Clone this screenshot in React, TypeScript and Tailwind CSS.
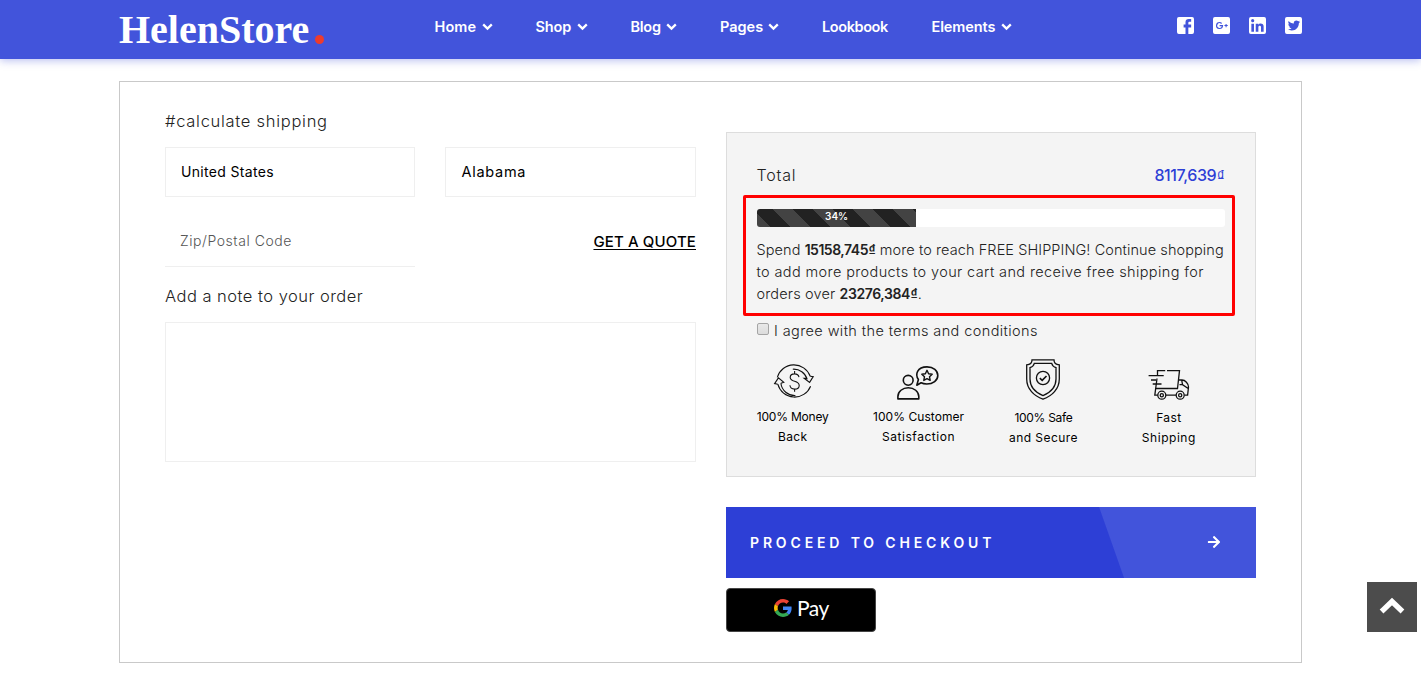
import type { ReactNode } from "react";
import { FaArrowRight } from "react-icons/fa";

function Dong({ className = "" }: { className?: string }) {
  return <span className={"font-['Liberation_Sans'] leading-none tracking-normal " + className}>₫</span>;
}

function Chevron() {
  return (
    <svg width="11" height="8" viewBox="0 0 11 8" fill="none" stroke="#fff" strokeWidth="2.3">
      <path d="M1.2 1.4 5.5 5.6 9.8 1.4" />
    </svg>
  );
}

const nav = [
  { label: "Home", menu: true, cls: "w-[42px] tracking-[0.1px]" },
  { label: "Shop", menu: true, cls: "w-[36px] tracking-[-0.15px]" },
  { label: "Blog", menu: true, cls: "w-[30.5px] tracking-[-0.25px]" },
  { label: "Pages", menu: true, cls: "w-[43px] tracking-[0px]" },
  { label: "Lookbook", menu: false, cls: "w-[66.5px] tracking-[-0.4px]" },
  { label: "Elements", menu: true, cls: "w-[64px] tracking-[-0.1px]" },
];

const social = [
  "M5,3H19A2,2 0 0,1 21,5V19A2,2 0 0,1 19,21H5A2,2 0 0,1 3,19V5A2,2 0 0,1 5,3M18,5H15.5A3.5,3.5 0 0,0 12,8.5V11H10V14H12V21H15V14H18V11H15V9A1,1 0 0,1 16,8H18V5Z",
  "M19,3A2,2 0 0,1 21,5V19A2,2 0 0,1 19,21H5A2,2 0 0,1 3,19V5A2,2 0 0,1 5,3H19Z M10 8.2A3.8 3.8 0 1 0 13.7 12.6V11.4H10V12.7H12.3A2.4 2.4 0 1 1 11.6 10.3L12.6 9.3A3.8 3.8 0 0 0 10 8.2Z M16.3 10.3V11.5H15.1V12.6H16.3V13.8H17.4V12.6H18.6V11.5H17.4V10.3Z",
  "M19,3A2,2 0 0,1 21,5V19A2,2 0 0,1 19,21H5A2,2 0 0,1 3,19V5A2,2 0 0,1 5,3H19M18.5,18.5V13.2A3.26,3.26 0 0,0 15.24,9.94C14.39,9.94 13.4,10.46 12.92,11.24V10.13H10.13V18.5H12.92V13.57C12.92,12.8 13.54,12.17 14.31,12.17A1.4,1.4 0 0,1 15.71,13.57V18.5H18.5M6.88,8.56A1.68,1.68 0 0,0 8.56,6.88C8.56,5.95 7.81,5.19 6.88,5.19A1.69,1.69 0 0,0 5.19,6.88C5.19,7.81 5.95,8.56 6.88,8.56M8.27,18.5V10.13H5.5V18.5H8.27Z",
  "M5,3H19A2,2 0 0,1 21,5V19A2,2 0 0,1 19,21H5A2,2 0 0,1 3,19V5A2,2 0 0,1 5,3M17.71,9.33C18.19,8.93 18.75,8.45 19,7.92C18.59,8.13 18.1,8.26 17.56,8.33C18.06,7.97 18.47,7.5 18.68,6.86C18.16,7.14 17.63,7.38 16.97,7.5C15.42,5.63 11.71,7.15 12.37,9.95C9.76,9.79 8.17,8.61 6.85,7.16C6.1,8.38 6.75,10.23 7.64,10.74C7.18,10.71 6.83,10.57 6.5,10.41C6.54,11.95 7.39,12.69 8.58,13.09C8.22,13.16 7.82,13.18 7.44,13.12C7.77,14.19 8.58,14.86 9.9,15C9,15.76 7.34,16.29 6,16.08C7.15,16.81 8.46,17.39 10.28,17.31C14.69,17.11 17.64,13.95 17.71,9.33Z",
];

function Header() {
  return (
    <header className="h-[59px] bg-[#4254db] shadow-[0_2px_8px_rgba(66,84,219,0.35)]">
      <div className="flex h-full pl-[119px]">
        <div className="flex w-[315.5px] pt-[3px]">
          <span className="w-[191px] whitespace-nowrap font-['Liberation_Serif',serif] text-[40px] leading-[54px] font-bold text-white">
            HelenStore
          </span>
          <span className="mt-[32px] ml-[5px] h-[9px] w-[9px] rounded-full bg-[#ee3b2c]" />
        </div>
        <nav className="flex h-[54px] w-[742.5px] items-center gap-[43px] text-[14.5px] font-semibold text-white">
          {nav.map((n) => (
            <a key={n.label} className="flex items-center gap-[5px] whitespace-nowrap">
              <span className={n.cls}>{n.label}</span>
              {n.menu && <Chevron />}
            </a>
          ))}
        </nav>
        <div className="flex gap-[19px] pt-[17px]">
          {social.map((d, i) => (
            <svg key={i} width="17" height="17" viewBox="3 3 18 18" fill="#fff" fillRule="evenodd">
              <path d={d} />
            </svg>
          ))}
        </div>
      </div>
    </header>
  );
}

function ShippingForm() {
  return (
    <section className="w-[531px] pt-[27px]">
      <h3 className="text-[16.5px] leading-6 font-light tracking-[0.72px] text-[#222]">#calculate shipping</h3>
      <div className="mt-[14px] flex gap-[30px] text-[14px]">
        <div className="flex h-[50px] w-[250px] items-center border border-[#efefef] pb-[2px] pl-[15px] tracking-[0.33px]">
          United States
        </div>
        <div className="flex h-[50px] w-[251px] items-center border border-[#efefef] pl-[15.5px] text-[14.5px] tracking-[0.72px]">
          Alabama
        </div>
      </div>
      <div className="mt-[19px] flex justify-between">
        <div className="flex h-[51px] w-[250px] items-center border-b border-[#efefef] pb-[2px] pl-[15px] text-[14px] font-light tracking-[0.55px] text-[#555]">
          Zip/Postal Code
        </div>
        <button className="flex h-[53px] items-center text-[15px] font-medium tracking-[0.12px] whitespace-nowrap underline underline-offset-2">
          GET A QUOTE
        </button>
      </div>
      <h3 className="mt-[15px] text-[16.5px] leading-6 font-light tracking-[0.48px] text-[#222]">
        Add a note to your order
      </h3>
      <div className="mt-[14px] h-[140px] border border-[#efefef]" />
    </section>
  );
}

function Feature({ icon, lines, cls }: { icon: ReactNode; lines: [string, string]; cls: [string, string] }) {
  return (
    <div className="flex w-[125.4px] flex-col items-center text-[12px] leading-5 whitespace-nowrap text-black">
      <div className="flex h-[48px] items-start">{icon}</div>
      <span className={cls[0]}>{lines[0]}</span>
      <span className={cls[1]}>{lines[1]}</span>
    </div>
  );
}

const money = (
  <svg width="42" height="44" viewBox="0 0 42 44" fill="none" stroke="#111" strokeWidth="1.1">
    <path d="M4.3 18.4A17.3 17.3 0 0 1 37.2 17.3" />
    <path d="M19.8 10.2A14 14 0 0 1 34.2 20.4" />
    <path d="M37.2 17.3 40.2 17.6 36.6 23.4 31.2 19.3 34 19.4" />
    <path d="M37.6 27.2A17.3 17.3 0 0 1 4.8 25.2" />
    <path d="M22.4 36.6A14 14 0 0 1 7.9 24.3" />
    <path d="M4.8 25.2 1.6 24.6 5.4 18.9 10.8 23.3 7.9 24.3" />
    <path d="M26 18.2C25.5 15.9 23.8 14.9 21.6 14.9 19 14.9 17.2 16.2 17.2 18.4 17.2 20.8 19.2 21.5 21.6 22.2 24.2 23 26.2 23.8 26.2 26.4 26.2 28.8 24.2 30.1 21.6 30.1 18.9 30.1 17.2 28.8 16.9 26.3M21.6 12.1V14.9M21.6 30.1V32.8" />
  </svg>
);
const customer = (
  <svg width="42" height="44" viewBox="0 0 42 44" fill="none" stroke="#111" strokeWidth="1.6" strokeLinejoin="round">
    <circle cx="11.2" cy="21.3" r="4.9" />
    <path d="M.9 39.9V37.6C.9 32.4 5.6 28.8 11.3 28.8S21.8 32.4 21.8 37.6V39.9Z" />
    <path d="M19.8 26.2 21.4 20.5C17.9 15.5 20 7.9 30 7.9 36.5 7.9 40.8 11.7 40.8 16.5S36 25 29.8 25C27.3 25 25.4 24.5 24.1 23.8Z" />
    <path d="M30 11.3 31.6 14.7 35.2 15.2 32.5 17.7 33.2 21.4 30 19.6 26.8 21.4 27.5 17.7 24.8 15.2 28.4 14.7Z" strokeWidth="1.4" />
  </svg>
);
const shield = (
  <svg width="36" height="44" viewBox="0 0 36 44" fill="none" stroke="#111" strokeWidth="1.3">
    <path d="M7 .9H29C29 3.8 31 5.5 34.3 5.8V20C34.3 30 27 37 18 40.2 9 37 1.7 30 1.7 20V5.8C5 5.5 7 3.8 7 .9Z" />
    <path d="M9.3 4.3H26.7C27.3 6.6 28.8 8 31 8.6V20C31 28 25.5 33.5 18 36.6 10.5 33.5 5 28 5 20V8.6C7.2 8 8.7 6.6 9.3 4.3Z" />
    <circle cx="18" cy="19" r="6.6" />
    <path d="M14.8 19.1 17.2 21.3 21.5 17" strokeWidth="1.6" />
  </svg>
);
const truck = (
  <svg width="42" height="44" viewBox="0 0 42 44" fill="none" stroke="#111" strokeWidth="1.3">
    <path d="M9.5 16V11.6H17.2M19 11.6H31.5L29.5 29.5H8M9 19.5 6.8 36.2H9.8M17.8 36.2H28M36.5 36.2H39.6L40.5 28C40.5 24.5 37.2 21 34 21H30.5M31.5 25.7H34.5L40.2 29.5M34.5 25.7 33.7 21M.6 16.7H15.7M3 21H8M4.7 25H13.5" />
    <circle cx="13.8" cy="36.2" r="4" />
    <circle cx="13.8" cy="36.2" r="1.6" />
    <circle cx="32.2" cy="36.2" r="4" />
    <circle cx="32.2" cy="36.2" r="1.6" />
  </svg>
);

function Summary() {
  return (
    <section className="w-[530px] pt-[50px]">
      <div className="h-[345px] border border-[#ddd] bg-[#f4f4f4] px-[30px] pt-[30px] text-[#222]">
        <div className="flex h-6 items-center justify-between text-[16px]">
          <span className="-ml-[0.5px] font-light tracking-[0.8px]">Total</span>
          <span className="font-medium tracking-[-0.4px] whitespace-nowrap text-[#2d3fd6]">
            8117,639
            <Dong className="ml-[0.5px] align-[-1px] text-[16px]" />
          </span>
        </div>
        <div className="relative">
          <div className="pointer-events-none absolute top-[8px] -left-[14px] h-[121px] w-[492px] rounded-[2px] border-[3px] border-[#ff0000]" />
        </div>
        <div className="mt-[22px] flex h-[18px] overflow-hidden rounded-[3px] bg-white">
          <div className="h-full w-[34%] bg-[#222] bg-[linear-gradient(45deg,rgba(255,255,255,.15)_25%,transparent_25%,transparent_50%,rgba(255,255,255,.15)_50%,rgba(255,255,255,.15)_75%,transparent_75%,transparent)] bg-[length:40px_40px] bg-[position:16px_0] text-center text-[10px] leading-[15px] font-semibold text-white">
            34%
          </div>
        </div>
        <p className="mt-[12px] -ml-[0.5px] flex flex-col text-[14.5px] leading-[22px] font-light whitespace-nowrap">
          <span className="h-[22px] tracking-[0.08px]">
            Spend{" "}
            <b className="text-[14px] font-semibold tracking-[-0.48px]">
              15158,745
              <Dong className="ml-[0.5px] text-[14px]" />
            </b>{" "}
            more to reach FREE SHIPPING! Continue shopping
          </span>
          <span className="h-[22px] tracking-[0.38px]">to add more products to your cart and receive free shipping for</span>
          <span className="h-[22px] tracking-[0.15px]">
            orders over{" "}
            <b className="text-[14px] font-semibold tracking-[-0.4px]">
              23276,384
              <Dong className="ml-[0.5px] text-[14px]" />
            </b>
            .
          </span>
        </p>
        <label className="mt-[15px] flex h-[22px] items-center text-[14.5px] font-light whitespace-nowrap">
          <span className="mb-[4px] h-[12px] w-[12px] rounded-[2px] border border-[#a5a5a5] bg-gradient-to-b from-[#e9e9e9] to-[#dcdcdc]" />
          <span className="ml-[5px] tracking-[0.4px]">I agree with the terms and conditions</span>
        </label>
        <div className="mt-[17px] -ml-[27px] flex w-[502px]">
          <Feature icon={<div className="pl-[2px]">{money}</div>} lines={["100% Money", "Back"]} cls={["tracking-[-0.2px]", "tracking-[0.3px]"]} />
          <Feature icon={customer} lines={["100% Customer", "Satisfaction"]} cls={["tracking-[0.05px] pl-[1px]", "tracking-[0.53px] pl-[1px]"]} />
          <Feature icon={shield} lines={["100% Safe", "and Secure"]} cls={["tracking-[-0.3px] pt-px", "tracking-[0.45px]"]} />
          <Feature icon={truck} lines={["Fast", "Shipping"]} cls={["tracking-[0.4px] pt-px", "tracking-[0.53px]"]} />
        </div>
      </div>
      <button className="mt-[30px] flex h-[71px] w-full items-center justify-between bg-[linear-gradient(70.6deg,#2d3fd6_0,#2d3fd6_375px,#4254db_376px)] pr-[35px] pb-px pl-[24px] text-white">
        <span className="text-[14px] font-semibold tracking-[3.85px] whitespace-nowrap">PROCEED TO CHECKOUT</span>
        <FaArrowRight size={14} />
      </button>
      <button className="mt-[10px] flex h-[44px] w-[150px] items-center justify-center rounded-[4px] border border-[#444] bg-black pb-[5px] pl-[1px] text-white">
        <svg width="18" height="18" viewBox="0 0 48 48">
          <path fill="#EA4335" d="M24 9.5c3.54 0 6.71 1.22 9.21 3.6l6.85-6.85C35.9 2.38 30.47 0 24 0 14.62 0 6.51 5.38 2.56 13.22l7.98 6.19C12.43 13.72 17.74 9.5 24 9.5z" />
          <path fill="#4285F4" d="M46.98 24.55c0-1.57-.15-3.09-.38-4.55H24v9.02h12.94c-.58 2.96-2.26 5.48-4.78 7.18l7.73 6c4.51-4.18 7.09-10.36 7.09-17.65z" />
          <path fill="#FBBC05" d="M10.53 28.59c-.48-1.45-.76-2.99-.76-4.59s.27-3.14.76-4.59l-7.98-6.19C.92 16.46 0 20.12 0 24c0 3.88.92 7.54 2.56 10.78l7.97-6.19z" />
          <path fill="#34A853" d="M24 48c6.48 0 11.93-2.13 15.89-5.81l-7.73-6c-2.15 1.45-4.92 2.3-8.16 2.3-6.26 0-11.57-4.22-13.47-9.91l-7.98 6.19C6.51 42.62 14.62 48 24 48z" />
        </svg>
        <span className="ml-[5px] font-['Lato',sans-serif] text-[21px] leading-6 tracking-[-0.5px]">Pay</span>
      </button>
    </section>
  );
}

export default function App() {
  return (
    <div className="h-[677px] overflow-hidden bg-white font-['Inter',sans-serif] text-black">
      <Header />
      <main className="mt-[22px] ml-[119px] flex h-[582px] w-[1183px] gap-[30px] border border-[#c9c9c9] pl-[45px]">
        <ShippingForm />
        <Summary />
      </main>
      <button className="fixed right-[4px] bottom-[45px] flex h-[50px] w-[50px] items-center justify-center bg-[#4c4c4c] pb-[2px]">
        <svg width="26" height="18" viewBox="0 0 26 18" fill="none" stroke="#fff" strokeWidth="5.4" strokeLinecap="square">
          <path d="M4.5 12.7 13 4.6 21.5 12.7" />
        </svg>
      </button>
    </div>
  );
}
